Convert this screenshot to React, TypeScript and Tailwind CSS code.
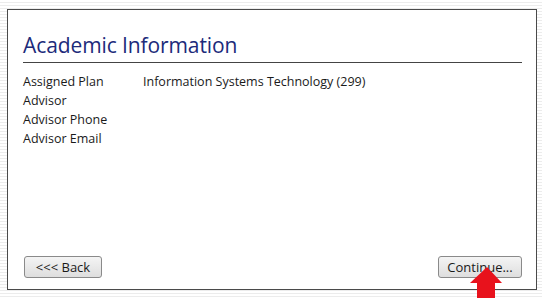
export default function App() {
  const rows: [string, string][] = [
    ["Assigned Plan", "Information Systems Technology (299)"],
    ["Advisor", ""],
    ["Advisor Phone", ""],
    ["Advisor Email", ""],
  ];

  return (
    <div className="relative w-[542px] h-[298px] overflow-hidden bg-[repeating-linear-gradient(to_bottom,#ffffff_0px,#ffffff_2px,#ececec_2px,#ececec_3px)] pt-[9px] pl-[7px] font-['Open_Sans',sans-serif]">
      <div className="w-[530px] h-[281px] bg-white border border-[#4a4a4a] flex flex-col px-[15px] pb-[11px]">
        {/* Heading */}
        <h1 className="mt-[20px] text-[21px] leading-[30px] text-[#202a7a] tracking-[-0.1px]">
          Academic Information
        </h1>
        <div className="mt-[2px] h-px w-[499px] bg-[#444]" />

        {/* Info rows */}
        <div className="mt-[9px] flex flex-col">
          {rows.map(([label, value]) => (
            <div key={label} className="flex text-[12.5px] leading-[19px] text-[#1a1a1a]">
              <div className="w-[120px]">{label}</div>
              <div>{value}</div>
            </div>
          ))}
        </div>

        {/* Buttons */}
        <div className="mt-auto flex justify-between pl-px w-[499px]">
          <button className="w-[78px] h-[22px] rounded-[3px] border border-[#8a8a8a] bg-[linear-gradient(to_bottom,#f4f4f4,#dedede)] text-[13px] text-[#1a1a1a] leading-none">
            &lt;&lt;&lt; Back
          </button>
          <button className="w-[84px] h-[22px] rounded-[3px] border border-[#8a8a8a] bg-[linear-gradient(to_bottom,#f4f4f4,#dedede)] text-[13px] text-[#1a1a1a] leading-none">
            Continue...
          </button>
        </div>
      </div>

      {/* Red pointer arrow over the Continue button */}
      <svg className="absolute left-[469px] top-[266px]" width="34" height="32" viewBox="0 0 34 32">
        <polygon points="18,1 33,17 26,17 26,32 8,32 8,17 1,17" fill="#e8121c" />
      </svg>
    </div>
  );
}
